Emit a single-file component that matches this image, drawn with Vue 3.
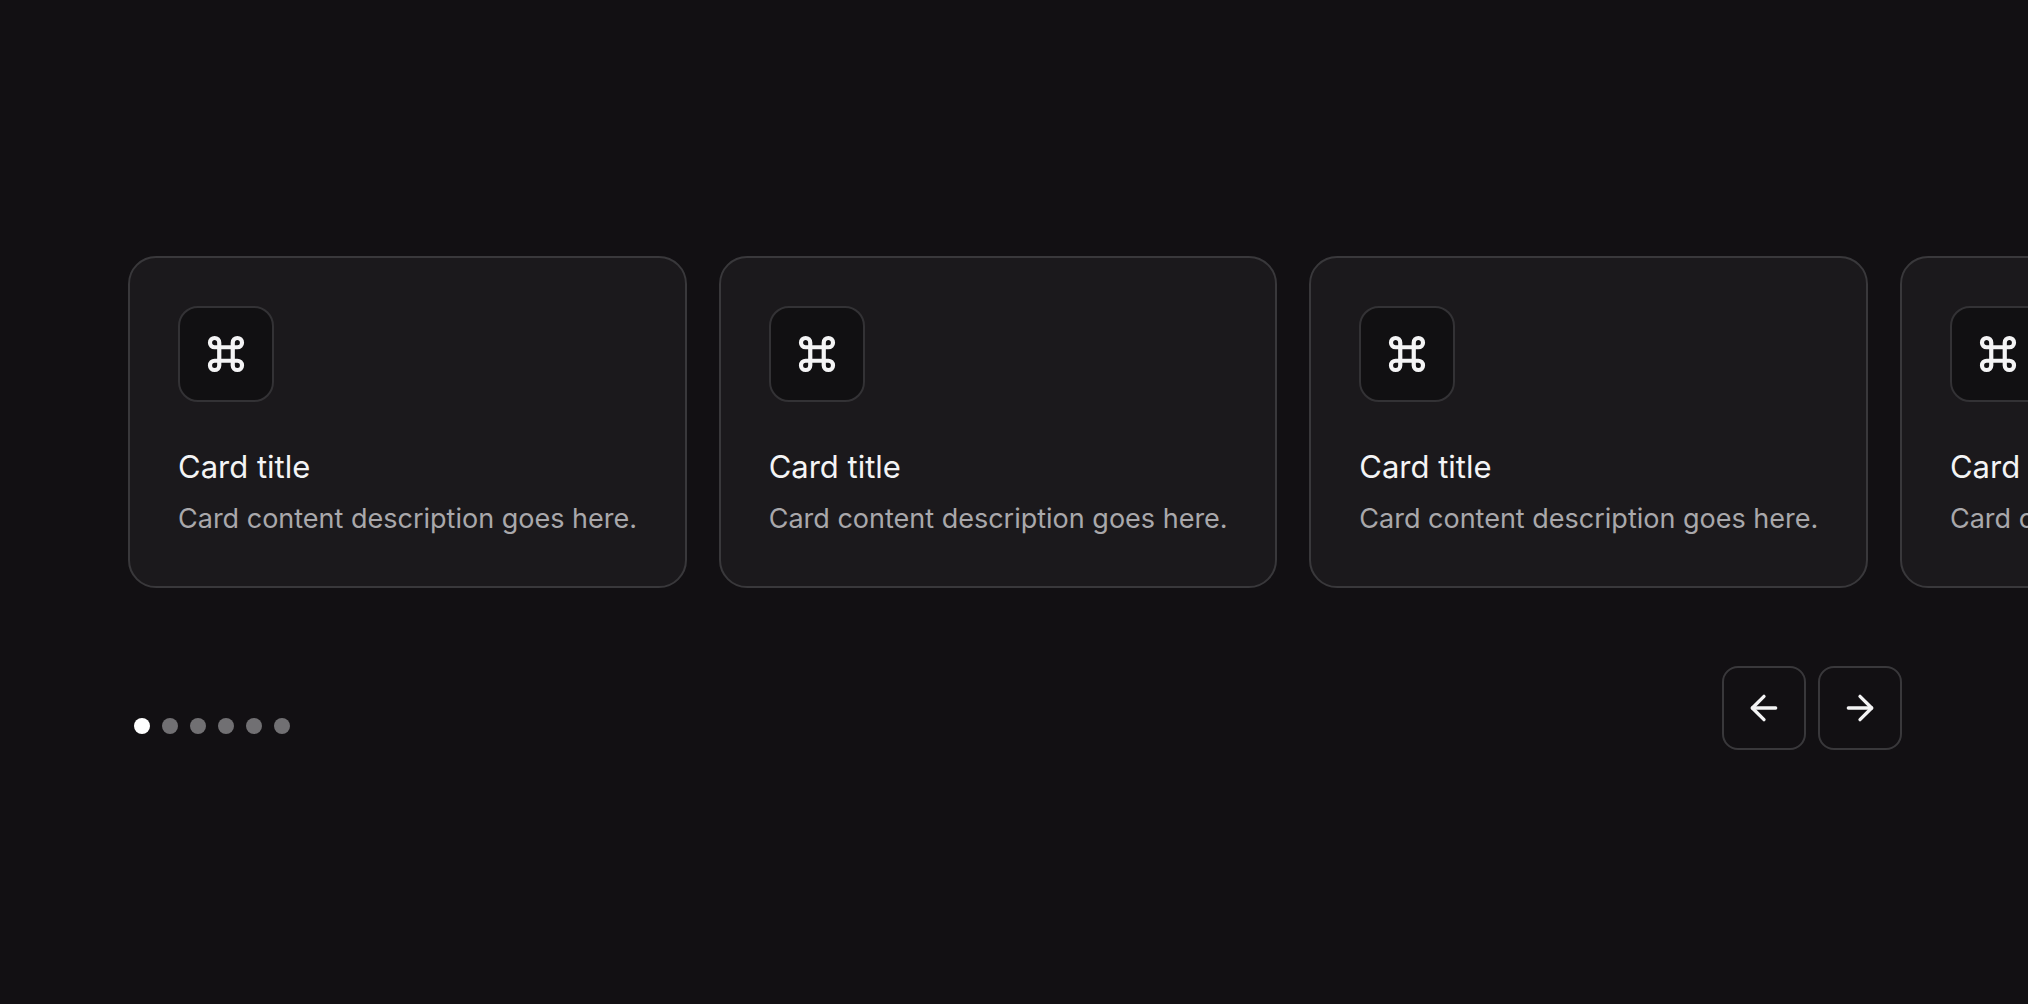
<script setup>
const cards = [1, 2, 3, 4, 5, 6]
</script>

<template>
  <main class="page">
    <section class="track">
      <article v-for="card in cards" :key="card" class="card">
        <div class="icon-box">
          <svg class="cmd" viewBox="0 0 40 40" fill="none" stroke="currentColor" stroke-width="4.2" stroke-linecap="round" stroke-linejoin="round">
            <path d="M26.75 8.625V31.375a4.625 4.625 0 1 0 4.625-4.625H8.625a4.625 4.625 0 1 0 4.625 4.625V8.625a4.625 4.625 0 1 0-4.625 4.625H31.375a4.625 4.625 0 1 0-4.625-4.625" />
          </svg>
        </div>
        <h3 class="title">Card title</h3>
        <p class="desc">Card content description goes here.</p>
      </article>
    </section>
    <footer class="controls">
      <div class="dots">
        <span v-for="(card, i) in cards" :key="card" class="dot" :class="{ active: i === 0 }"></span>
      </div>
      <div class="nav">
        <button class="nav-btn" aria-label="Previous">
          <svg class="arrow" viewBox="0 0 24 24" fill="none" stroke="currentColor" stroke-width="2" stroke-linecap="round" stroke-linejoin="round">
            <path d="m12 19-7-7 7-7" /><path d="M19 12H5" />
          </svg>
        </button>
        <button class="nav-btn" aria-label="Next">
          <svg class="arrow" viewBox="0 0 24 24" fill="none" stroke="currentColor" stroke-width="2" stroke-linecap="round" stroke-linejoin="round">
            <path d="M5 12h14" /><path d="m12 5 7 7-7 7" />
          </svg>
        </button>
      </div>
    </footer>
  </main>
</template>

<style>
html, body { background: #121013; }
</style>

<style scoped>
.page {
  width: 2028px;
  height: 1004px;
  box-sizing: border-box;
  padding: 256px 128px 0;
  overflow: hidden;
  background: #121013;
  font-family: Inter, "Liberation Sans", sans-serif;
}
.track {
  display: flex;
  gap: 32px;
  width: 1772px;
}
.card {
  flex: 0 0 558.67px;
  min-width: 0;
  box-sizing: border-box;
  height: 332px;
  padding: 48px;
  border: 2px solid #39383b;
  border-radius: 28px;
  background: #1b191c;
}
.icon-box {
  width: 96px;
  height: 96px;
  box-sizing: border-box;
  display: flex;
  align-items: center;
  justify-content: center;
  border: 2px solid #333235;
  border-radius: 20px;
  background: #111012;
  color: #f4f4f5;
}
.cmd { width: 40px; height: 40px; }
.title {
  margin: 43px 0 0;
  font-size: 31px;
  line-height: 44px;
  font-weight: 400;
  color: #f4f4f5;
}
.desc {
  margin: 8px 0 0;
  font-size: 27px;
  line-height: 44px;
  font-weight: 400;
  white-space: nowrap;
  color: #a9a8ab;
}
.controls {
  display: flex;
  justify-content: space-between;
  align-items: flex-end;
  margin-top: 78px;
  width: 1774px;
}
.dots {
  display: flex;
  gap: 12px;
  padding: 0 6px 16px;
}
.dot {
  width: 16px;
  height: 16px;
  border-radius: 50%;
  background: #717073;
}
.dot.active { background: #ffffff; }
.nav { display: flex; gap: 12px; }
.nav-btn {
  width: 84px;
  height: 84px;
  padding: 0;
  display: flex;
  align-items: center;
  justify-content: center;
  box-sizing: border-box;
  border: 2px solid #39383b;
  border-radius: 16px;
  background: #121013;
  color: #f4f4f5;
}
.arrow { width: 40px; height: 40px; }
</style>
